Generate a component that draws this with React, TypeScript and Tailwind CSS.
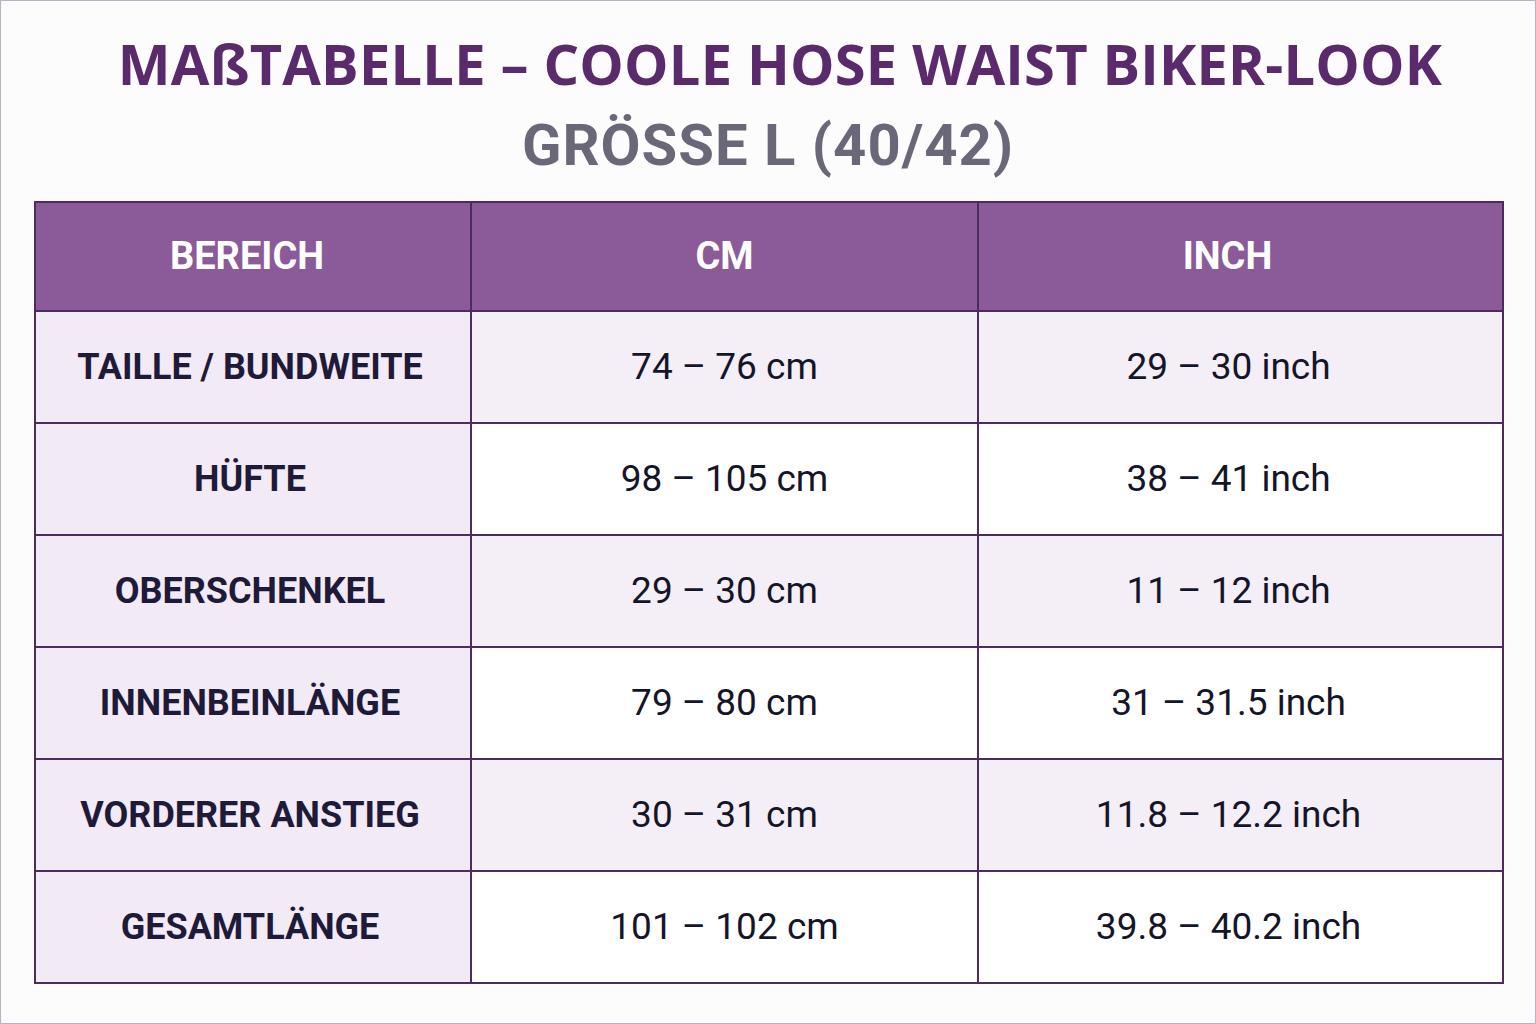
const rows = [
  { label: "TAILLE / BUNDWEITE", cm: "74 – 76 cm", inch: "29 – 30 inch" },
  { label: "HÜFTE", cm: "98 – 105 cm", inch: "38 – 41 inch" },
  { label: "OBERSCHENKEL", cm: "29 – 30 cm", inch: "11 – 12 inch" },
  { label: "INNENBEINLÄNGE", cm: "79 – 80 cm", inch: "31 – 31.5 inch" },
  { label: "VORDERER ANSTIEG", cm: "30 – 31 cm", inch: "11.8 – 12.2 inch" },
  { label: "GESAMTLÄNGE", cm: "101 – 102 cm", inch: "39.8 – 40.2 inch" },
];

export default function App() {
  return (
    <div className="w-[1536px] h-[1024px] bg-[#fdfcfd] border border-[#b9b2c2] flex flex-col items-center">
      <h1 className="mt-[26px] ml-[24px] h-[72px] flex items-center font-['Open_Sans',sans-serif] font-bold text-[56px] leading-none tracking-[0.2px] text-[#5b2a6c]">
        MAßTABELLE – COOLE HOSE WAIST BIKER-LOOK
      </h1>
      <h2 className="mt-[14px] h-[64px] flex items-center font-['Roboto',sans-serif] font-bold text-[58px] leading-none tracking-[1px] text-[#6a6878]">
        GRÖSSE L (40/42)
      </h2>
      <table className="mt-[24px] ml-[2px] border-collapse border-2 border-[#4c2c5c] font-['Roboto',sans-serif]">
        <thead>
          <tr className="h-[109px] bg-[#8a5a99] text-white text-[38px]">
            <th className="w-[436px] pr-[12px] border-2 border-[#4c2c5c] font-bold">BEREICH</th>
            <th className="w-[507px] border-2 border-[#4c2c5c] font-bold">CM</th>
            <th className="w-[525px] pr-[26px] border-2 border-[#4c2c5c] font-bold">INCH</th>
          </tr>
        </thead>
        <tbody>
          {rows.map((r, i) => {
            const shaded = i % 2 === 0;
            return (
              <tr key={r.label} className="h-[112px]">
                <td className="pr-[6px] border-2 border-[#4c2c5c] bg-[#f2eaf4] text-center font-bold text-[36px] text-[#1e1a3a]">
                  {r.label}
                </td>
                <td
                  className={
                    "border-2 border-[#4c2c5c] text-center text-[37px] text-[#15152a] " +
                    (shaded ? "bg-[#f4eef6]" : "bg-white")
                  }
                >
                  {r.cm}
                </td>
                <td
                  className={
                    "pr-[24px] border-2 border-[#4c2c5c] text-center text-[37px] text-[#15152a] " +
                    (shaded ? "bg-[#f4eef6]" : "bg-white")
                  }
                >
                  {r.inch}
                </td>
              </tr>
            );
          })}
        </tbody>
      </table>
    </div>
  );
}
